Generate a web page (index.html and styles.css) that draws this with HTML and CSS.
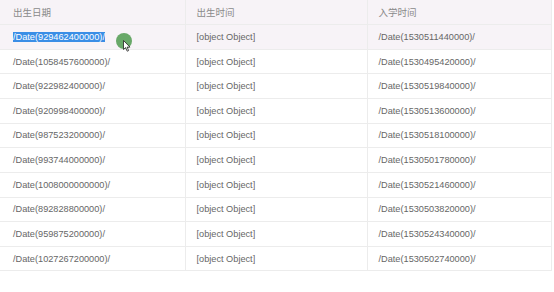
FILE: index.html
```html
<!DOCTYPE html>
<html>
<head>
<meta charset="utf-8">
<link rel="stylesheet" href="styles.css">
</head>
<body>
<div class="wrap">
<table class="grid">
  <thead>
    <tr><th>出生日期</th><th>出生时间</th><th>入学时间</th></tr>
  </thead>
  <tbody>
    <tr class="hover"><td><span class="sel">/Date(929462400000)/</span><span class="pointer"><span class="dot"></span><svg class="cursor" width="8" height="12" viewBox="0 0 8 12"><path d="M0.5 0.5 L0.5 9.5 L2.6 7.6 L4.2 11.2 L5.6 10.6 L4.1 7.1 L7 7.1 Z" fill="#fff" stroke="#222" stroke-width="0.8"/></svg></span></td><td>[object Object]</td><td>/Date(1530511440000)/</td></tr>
    <tr><td>/Date(1058457600000)/</td><td>[object Object]</td><td>/Date(1530495420000)/</td></tr>
    <tr><td>/Date(922982400000)/</td><td>[object Object]</td><td>/Date(1530519840000)/</td></tr>
    <tr><td>/Date(920998400000)/</td><td>[object Object]</td><td>/Date(1530513600000)/</td></tr>
    <tr><td>/Date(987523200000)/</td><td>[object Object]</td><td>/Date(1530518100000)/</td></tr>
    <tr><td>/Date(993744000000)/</td><td>[object Object]</td><td>/Date(1530501780000)/</td></tr>
    <tr><td>/Date(1008000000000)/</td><td>[object Object]</td><td>/Date(1530521460000)/</td></tr>
    <tr><td>/Date(892828800000)/</td><td>[object Object]</td><td>/Date(1530503820000)/</td></tr>
    <tr><td>/Date(959875200000)/</td><td>[object Object]</td><td>/Date(1530524340000)/</td></tr>
    <tr><td>/Date(1027267200000)/</td><td>[object Object]</td><td>/Date(1530502740000)/</td></tr>
  </tbody>
</table>
</div>
</body>
</html>
```
FILE: styles.css
```css
html, body {
  margin: 0;
  padding: 0;
  background: #fff;
}
.wrap {
  width: 552px;
}
.grid {
  width: 552px;
  border-collapse: collapse;
  table-layout: fixed;
  font-family: "Liberation Sans", Arial, "Noto Sans CJK SC", sans-serif;
  font-size: 9.2px;
  color: #666;
}
.grid th:nth-child(1), .grid td:nth-child(1) { width: 185px; }
.grid th:nth-child(2), .grid td:nth-child(2) { width: 182px; }
.grid th, .grid td {
  height: 24.64px;
  padding: 0 0 0 12px;
  text-align: left;
  white-space: nowrap;
  border-bottom: 1px solid #ececec;
  border-right: 1px solid #ececec;
  box-sizing: border-box;
  vertical-align: middle;
}
.grid th:first-child, .grid td:first-child {
  padding-left: 13px;
}
.grid td:nth-child(2), .grid th:nth-child(2) { padding-left: 11px; }
.grid td:nth-child(3), .grid th:nth-child(3) { padding-left: 11px; }
.grid th {
  font-weight: normal;
  color: #8a8a8a;
  font-family: "Noto Sans CJK SC", sans-serif;
  font-size: 9.5px;
  background: #f7f3f7;
}
.grid tr.hover td {
  background: #f7f3f7;
}
.sel {
  background: #3a8ee6;
  color: #fff;
}
.grid td:first-child {
  position: relative;
}
.pointer {
  position: absolute;
  left: 116px;
  top: 8px;
  width: 18px;
  height: 20px;
}
.dot {
  position: absolute;
  left: 0;
  top: 0;
  width: 16px;
  height: 16px;
  border-radius: 50%;
  background: #68a868;
}
.cursor {
  position: absolute;
  left: 7px;
  top: 7px;
}
```
